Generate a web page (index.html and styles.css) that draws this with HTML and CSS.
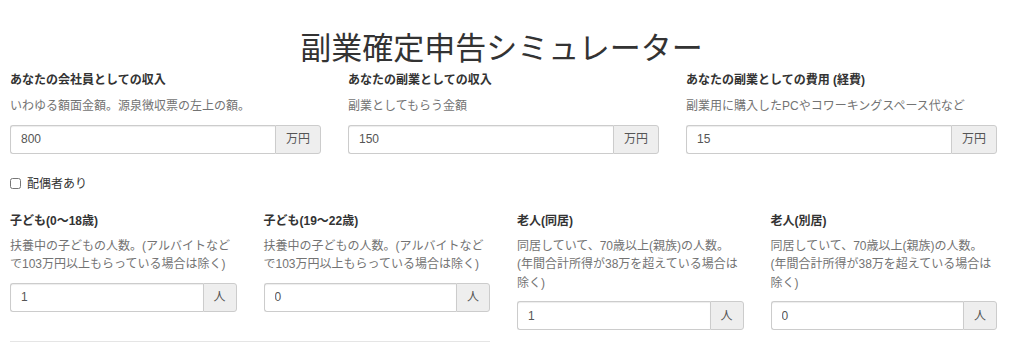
FILE: index.html
```html
<!DOCTYPE html>
<html lang="ja">
<head>
<meta charset="utf-8">
<title>副業確定申告シミュレーター</title>
<link rel="stylesheet" href="styles.css">
</head>
<body>
<div class="page">
  <h1 class="title">副業確定申告シミュレーター</h1>

  <div class="row3">
    <div class="field">
      <label class="label">あなたの会社員としての収入</label>
      <p class="help">いわゆる額面金額。源泉徴収票の左上の額。</p>
      <div class="igroup">
        <input class="ctrl" type="text" value="800">
        <span class="addon addon-yen">万円</span>
      </div>
    </div>
    <div class="field">
      <label class="label">あなたの副業としての収入</label>
      <p class="help">副業としてもらう金額</p>
      <div class="igroup">
        <input class="ctrl" type="text" value="150">
        <span class="addon addon-yen">万円</span>
      </div>
    </div>
    <div class="field">
      <label class="label">あなたの副業としての費用 (経費)</label>
      <p class="help">副業用に購入したPCやコワーキングスペース代など</p>
      <div class="igroup">
        <input class="ctrl" type="text" value="15">
        <span class="addon addon-yen">万円</span>
      </div>
    </div>
  </div>

  <label class="check"><input type="checkbox" class="cb"><span>配偶者あり</span></label>

  <div class="row2">
    <div class="half">
      <div class="pair">
        <div class="field">
          <label class="label">子ども(0〜18歳)</label>
          <p class="help">扶養中の子どもの人数。(アルバイトなどで103万円以上もらっている場合は除く)</p>
          <div class="igroup">
            <input class="ctrl" type="text" value="1">
            <span class="addon addon-nin">人</span>
          </div>
        </div>
        <div class="field">
          <label class="label">子ども(19〜22歳)</label>
          <p class="help">扶養中の子どもの人数。(アルバイトなどで103万円以上もらっている場合は除く)</p>
          <div class="igroup">
            <input class="ctrl" type="text" value="0">
            <span class="addon addon-nin">人</span>
          </div>
        </div>
      </div>
      <hr class="sep">
    </div>
    <div class="half">
      <div class="pair">
        <div class="field">
          <label class="label">老人(同居)</label>
          <p class="help">同居していて、70歳以上(親族)の人数。(年間合計所得が38万を超えている場合は除く)</p>
          <div class="igroup">
            <input class="ctrl" type="text" value="1">
            <span class="addon addon-nin">人</span>
          </div>
        </div>
        <div class="field">
          <label class="label">老人(別居)</label>
          <p class="help">同居していて、70歳以上(親族)の人数。(年間合計所得が38万を超えている場合は除く)</p>
          <div class="igroup">
            <input class="ctrl" type="text" value="0">
            <span class="addon addon-nin">人</span>
          </div>
        </div>
      </div>
      <hr class="sep">
    </div>
  </div>
</div>
</body>
</html>
```

FILE: styles.css
```css
* { box-sizing: border-box; }
html, body {
  margin: 0;
  padding: 0;
  background: #fff;
}
body {
  font-family: "Liberation Sans", "Noto Sans CJK JP", sans-serif;
  font-size: 12px;
  line-height: 18px;
  color: #333;
}
.page {
  padding: 0 27px 0 10px;
}
.title {
  margin: 28px 0 7px;
  padding-right: 4px;
  font-size: 31px;
  line-height: 36px;
  font-weight: 400;
  text-align: center;
  color: #333;
  font-family: "Noto Sans CJK JP", sans-serif;
}
.row3 {
  display: grid;
  grid-template-columns: repeat(3, 1fr);
  column-gap: 27px;
}
.field {
  display: flex;
  flex-direction: column;
  min-width: 0;
}
.label {
  display: block;
  font-weight: 700;
  line-height: 18px;
  color: #333;
}
.help {
  margin: 8px 0 0;
  color: #737373;
  line-height: 18.5px;
}
.igroup {
  display: flex;
  margin-top: 9px;
  height: 29px;
}
.ctrl {
  flex: 1;
  min-width: 0;
  height: 29px;
  margin: 0;
  padding: 0 10px;
  border: 1px solid #ccc;
  border-right: 0;
  border-radius: 3px 0 0 3px;
  box-shadow: inset 0 1px 1px rgba(0,0,0,.075);
  font-family: "Liberation Sans", "Noto Sans CJK JP", sans-serif;
  font-size: 12px;
  color: #555;
  background: #fff;
  outline: none;
}
.addon {
  display: flex;
  align-items: center;
  justify-content: center;
  flex: none;
  height: 29px;
  border: 1px solid #ccc;
  border-radius: 0 3px 3px 0;
  background: #eee;
  color: #555;
  font-size: 12px;
}
.addon-yen { width: 46px; }
.addon-nin { width: 34px; }
.check {
  display: flex;
  align-items: center;
  margin-top: 21px;
  height: 18px;
  color: #333;
}
.cb {
  width: 11px;
  height: 11px;
  margin: 0 6px 0 0;
}
.row2 {
  display: grid;
  grid-template-columns: 1fr 1fr;
  column-gap: 27px;
  margin-top: 19px;
}
.pair {
  display: grid;
  grid-template-columns: 1fr 1fr;
  column-gap: 27px;
}
.pair .help {
  margin-top: 7px;
}
.sep {
  margin: 29px 0 0;
  border: 0;
  border-top: 1px solid #e5e5e5;
}
```
